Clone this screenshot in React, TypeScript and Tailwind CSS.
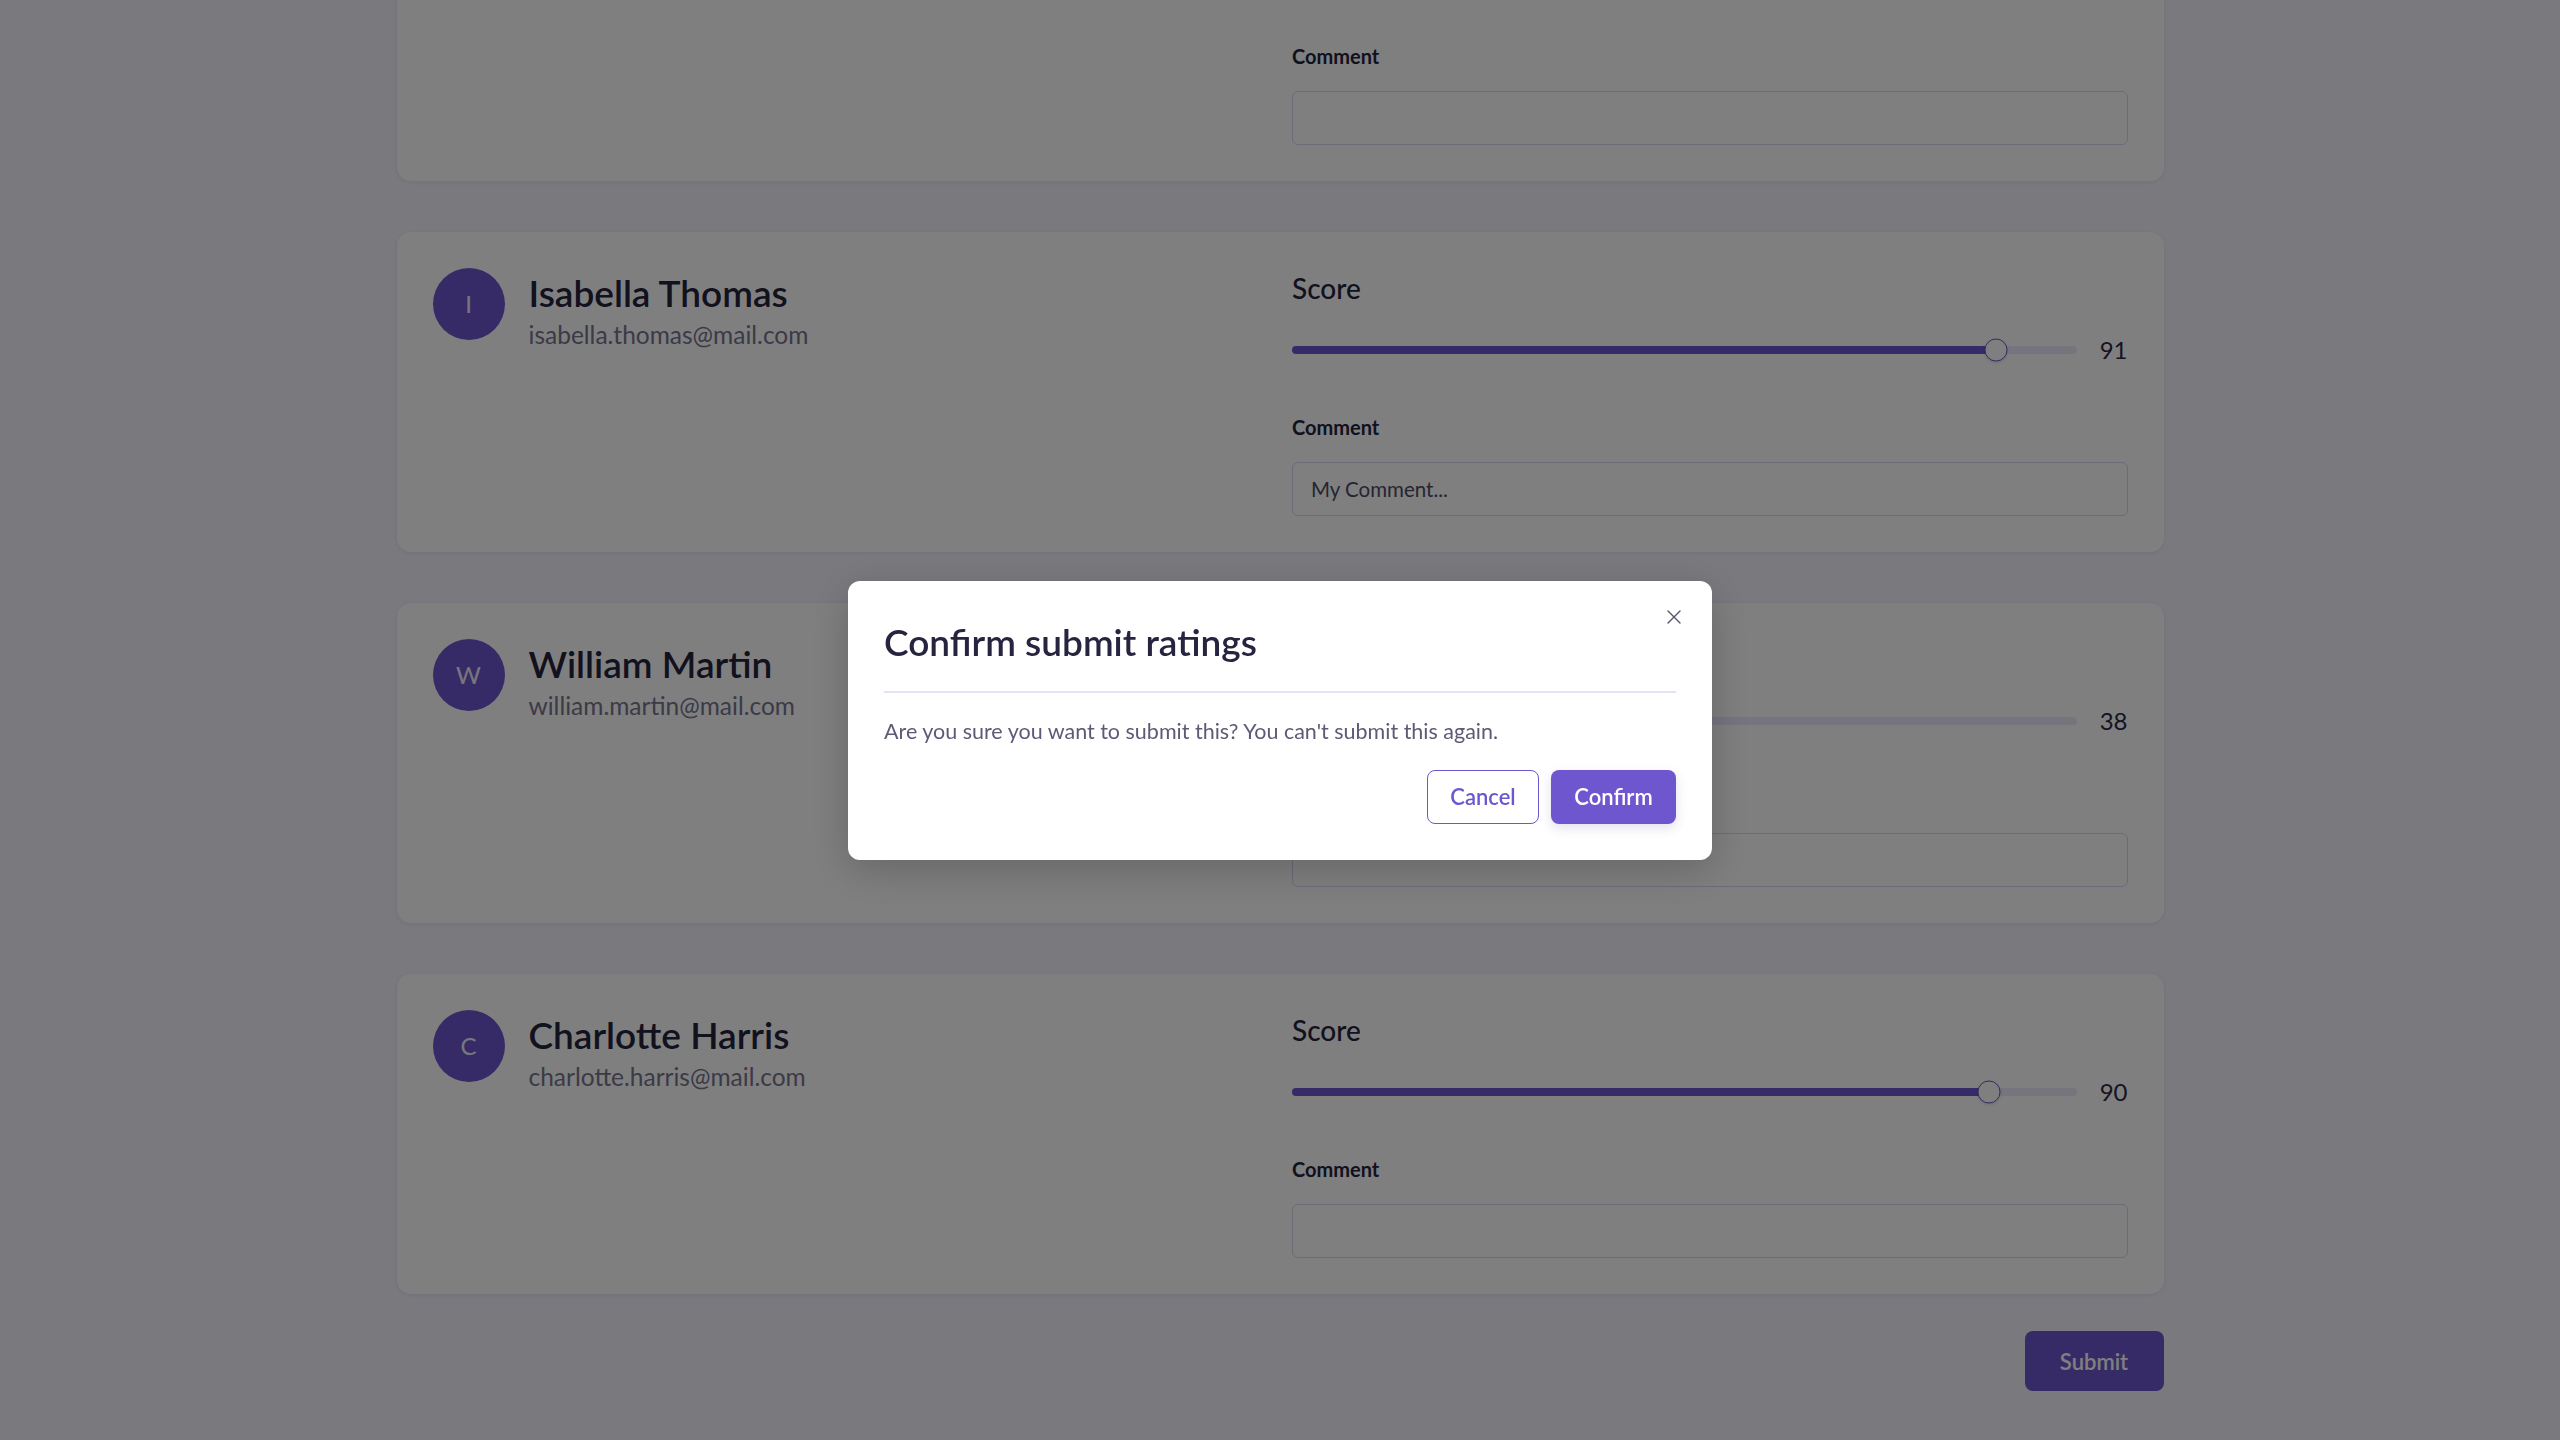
import { useState } from 'react'

type Rating = {
  name: string
  email: string
  score: number
  comment: string
}

const ratings: Rating[] = [
  { name: 'Mia Jackson', email: 'mia.jackson@mail.com', score: 64, comment: '' },
  { name: 'Isabella Thomas', email: 'isabella.thomas@mail.com', score: 91, comment: 'My Comment...' },
  { name: 'William Martin', email: 'william.martin@mail.com', score: 38, comment: '' },
  { name: 'Charlotte Harris', email: 'charlotte.harris@mail.com', score: 90, comment: '' },
]

function ScoreSlider({ value }: { value: number }) {
  // thumb is 23px wide, its centre travels from 11.5px to (width - 11.5px)
  const pos = `calc(11.5px + ${value / 100} * (100% - 23px))`
  return (
    <div className="flex items-center h-9 mt-[24px]">
      <div className="relative flex-1 h-2 rounded-full bg-[#eceafb]">
        <div className="absolute left-0 top-0 h-2 rounded-full bg-[#6e56cf]" style={{ width: pos }} />
        <div
          className="absolute top-1/2 w-[23px] h-[23px] -translate-x-1/2 -translate-y-1/2 rounded-full bg-white border-[1.5px] border-[#6e56cf] shadow-[0_1px_3px_rgba(0,0,0,0.15)]"
          style={{ left: pos }}
        />
      </div>
      <span className="w-[51px] text-right text-[24px] leading-9 text-[#2a2845]">{value}</span>
    </div>
  )
}

function RatingCard({ item }: { item: Rating }) {
  return (
    <div className="shrink-0 bg-white rounded-[14px] shadow-[0_1px_4px_rgba(40,30,90,0.08)] p-9 grid grid-cols-2 gap-6">
      <div className="flex items-start gap-6">
        <div className="w-[72px] h-[72px] shrink-0 rounded-full bg-[#6e56cf] flex items-center justify-center text-[24px] text-white/90">
          {item.name[0]}
        </div>
        <div className="flex flex-col mt-[2px]">
          <span className="text-[37px] leading-[45px] font-semibold text-[#24223d]">{item.name}</span>
          <span className="mt-[2px] text-[24.5px] leading-9 text-[#77758e]">{item.email}</span>
        </div>
      </div>
      <div className="flex flex-col">
        <span className="text-[28px] leading-[40px] font-medium text-[#24223d]">Score</span>
        <ScoreSlider value={item.score} />
        <label className="mt-[44px] text-[20px] leading-[30px] font-bold text-[#24223d]">Comment</label>
        <input
          defaultValue={item.comment}
          className="mt-5 h-[54px] px-[18px] rounded-md border border-[#d9d7ee] bg-white text-[20.5px] text-[#4d4b63] outline-none"
        />
      </div>
    </div>
  )
}

function ConfirmDialog() {
  return (
    <div className="fixed inset-0 bg-black/50 flex items-center justify-center">
      <div className="w-[864px] bg-white rounded-xl p-9 shadow-[0_10px_40px_rgba(0,0,0,0.2)]">
        <div className="flex items-start justify-between">
          <h2 className="text-[37px] leading-[50px] font-semibold text-[#26243f]">Confirm submit ratings</h2>
          <button className="w-6 h-6 -mr-[10px] -mt-[12px] flex items-center justify-center text-[#55536b]">
            <svg width="16" height="16" viewBox="0 0 16 16" fill="none" stroke="currentColor" strokeWidth="1.4" strokeLinecap="round">
              <path d="M2 2l12 12M14 2L2 14" />
            </svg>
          </button>
        </div>
        <div className="mt-6 h-[2px] bg-[#e4e2f5]" />
        <p className="mt-[23px] text-[21.5px] leading-[30px] text-[#5c5a75]">
          Are you sure you want to submit this? You can't submit this again.
        </p>
        <div className="mt-6 flex justify-end gap-3">
          <button className="w-[112px] h-[54px] rounded-lg border-[1.5px] border-[#6e56cf] text-[#6e56cf] text-[22px] font-semibold">
            Cancel
          </button>
          <button className="w-[125px] h-[54px] rounded-lg bg-[#6e56cf] text-white text-[22px] font-semibold shadow-[0_4px_12px_rgba(60,40,140,0.15)]">
            Confirm
          </button>
        </div>
      </div>
    </div>
  )
}

export default function App() {
  const [open] = useState(true)

  return (
    <div className="h-screen overflow-hidden bg-[#f3f2fd] font-['Lato','Open_Sans',sans-serif]">
      {/* scrolled to the bottom of the list */}
      <div className="h-full flex flex-col justify-end">
        <div className="w-full max-w-[1767px] mx-auto flex flex-col gap-[51px] shrink-0">
          {ratings.map((r) => (
            <RatingCard key={r.email} item={r} />
          ))}
        </div>
        <div className="w-full max-w-[1767px] mx-auto flex justify-end mt-[37px] mb-[49px] shrink-0">
          <button className="w-[139px] h-[60px] rounded-lg bg-[#6e56cf] text-white text-[22px] font-semibold">
            Submit
          </button>
        </div>
      </div>

      {open && <ConfirmDialog />}
    </div>
  )
}
